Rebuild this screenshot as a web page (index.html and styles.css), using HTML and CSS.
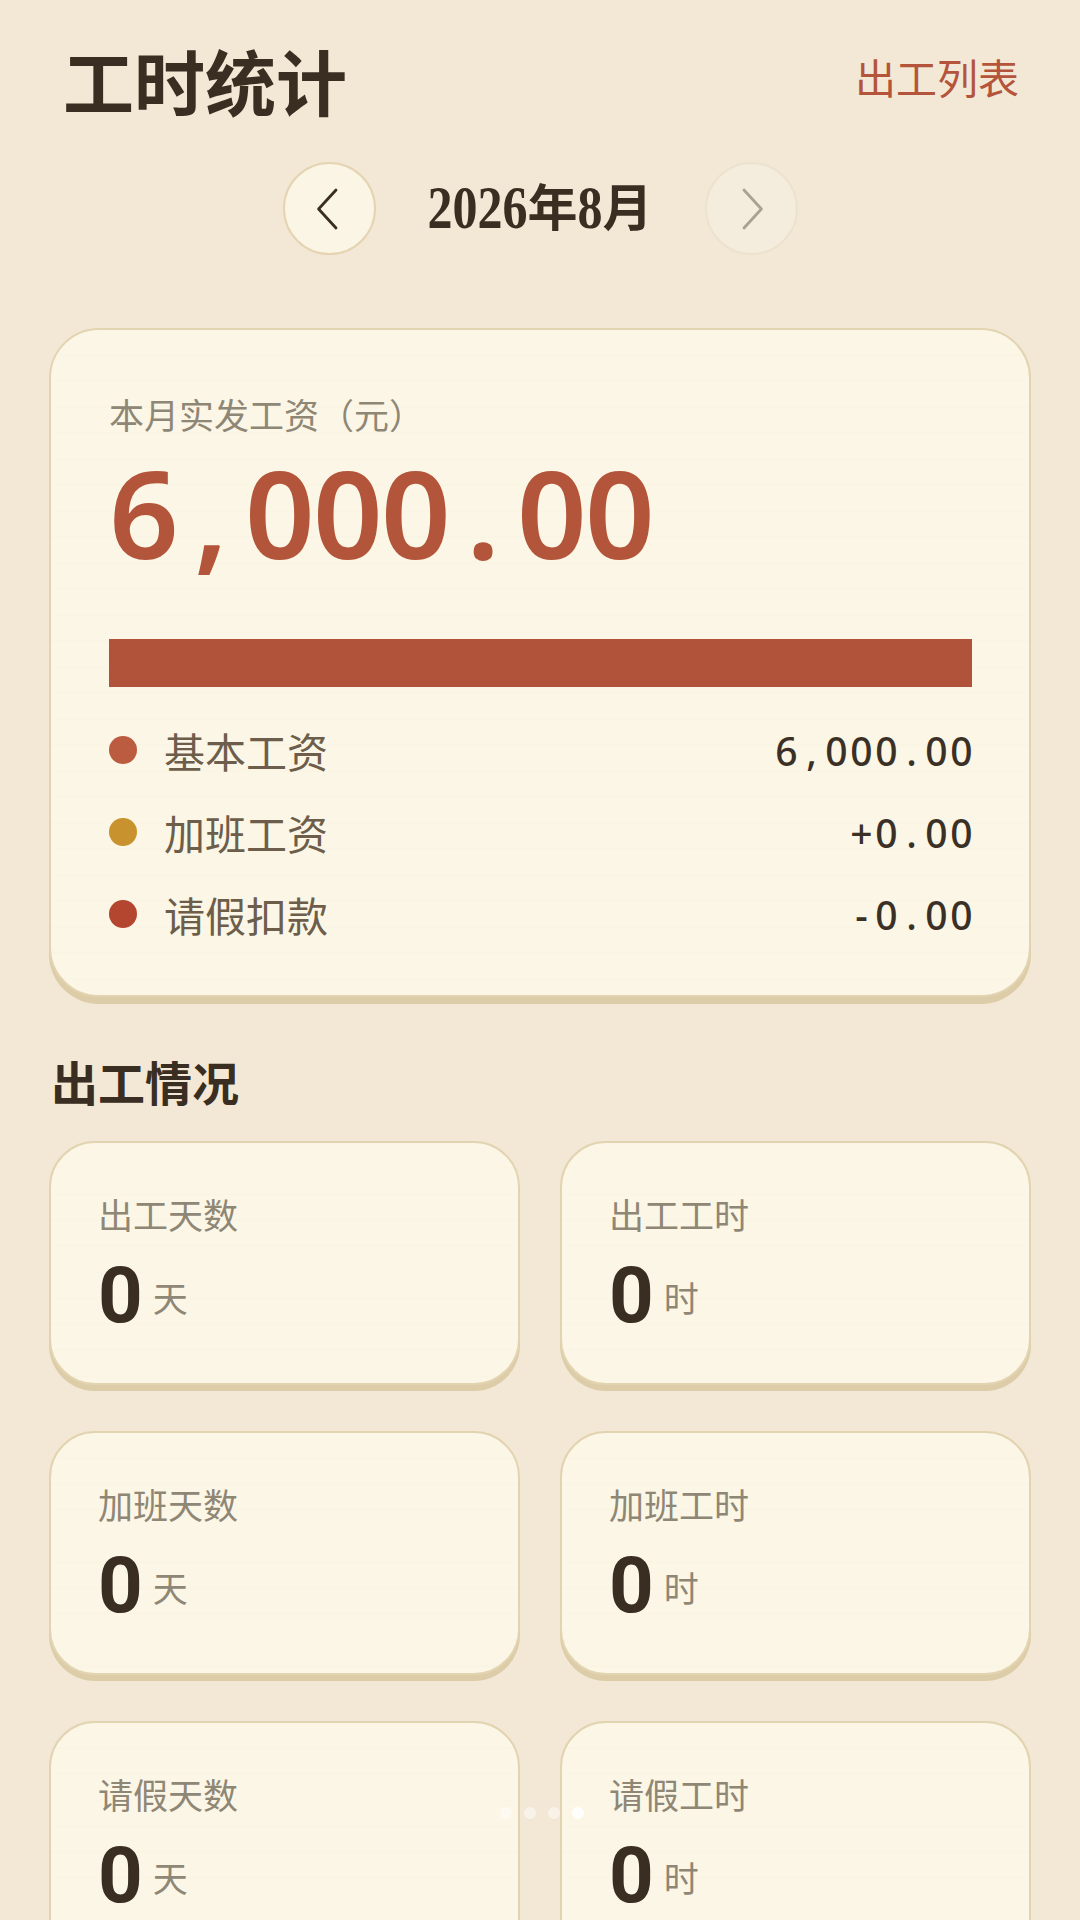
FILE: index.html
```html
<!DOCTYPE html>
<html lang="zh-CN">
<head>
<meta charset="utf-8">
<title>工时统计</title>
<link rel="stylesheet" href="styles.css">
</head>
<body>
<div class="page">
  <header class="header">
    <h1 class="title">工时统计</h1>
    <a class="link">出工列表</a>
  </header>

  <nav class="month-nav">
    <button class="nav-btn">
      <svg viewBox="0 0 24 24" width="48" height="48"><path d="M15.5 2.5 L6.8 12 L15.5 21.5" fill="none" stroke="#3a2e22" stroke-width="1.4" stroke-linecap="round" stroke-linejoin="round"/></svg>
    </button>
    <div class="month"><span class="d">2026</span>年<span class="d">8</span>月</div>
    <button class="nav-btn disabled">
      <svg viewBox="0 0 24 24" width="48" height="48"><path d="M8.5 2.5 L17.2 12 L8.5 21.5" fill="none" stroke="#a9a290" stroke-width="1.4" stroke-linecap="round" stroke-linejoin="round"/></svg>
    </button>
  </nav>

  <section class="card salary">
    <div class="salary-label">本月实发工资（元）</div>
    <div class="salary-amount"><span class="c">6</span><span class="c">,</span><span class="c">0</span><span class="c">0</span><span class="c">0</span><span class="c">.</span><span class="c">0</span><span class="c">0</span></div>
    <div class="bar"><div class="bar-fill" style="width:100%"></div></div>
    <ul class="rows">
      <li class="row"><span class="dot dot-base"></span><span class="row-label">基本工资</span><span class="row-value"><span class="c">6</span><span class="c">,</span><span class="c">0</span><span class="c">0</span><span class="c">0</span><span class="c">.</span><span class="c">0</span><span class="c">0</span></span></li>
      <li class="row"><span class="dot dot-ot"></span><span class="row-label">加班工资</span><span class="row-value"><span class="c">+</span><span class="c">0</span><span class="c">.</span><span class="c">0</span><span class="c">0</span></span></li>
      <li class="row"><span class="dot dot-leave"></span><span class="row-label">请假扣款</span><span class="row-value"><span class="c">-</span><span class="c">0</span><span class="c">.</span><span class="c">0</span><span class="c">0</span></span></li>
    </ul>
  </section>

  <h2 class="section-title">出工情况</h2>

  <div class="stats">
    <div class="card stat"><div class="stat-label">出工天数</div><div class="stat-value"><span class="num">0</span><span class="unit">天</span></div></div>
    <div class="card stat"><div class="stat-label">出工工时</div><div class="stat-value"><span class="num">0</span><span class="unit">时</span></div></div>
    <div class="card stat"><div class="stat-label">加班天数</div><div class="stat-value"><span class="num">0</span><span class="unit">天</span></div></div>
    <div class="card stat"><div class="stat-label">加班工时</div><div class="stat-value"><span class="num">0</span><span class="unit">时</span></div></div>
    <div class="card stat"><div class="stat-label">请假天数</div><div class="stat-value"><span class="num">0</span><span class="unit">天</span></div></div>
    <div class="card stat"><div class="stat-label">请假工时</div><div class="stat-value"><span class="num">0</span><span class="unit">时</span></div></div>
  </div>
</div>

<div class="pager">
  <span class="pdot"></span><span class="pdot"></span><span class="pdot"></span><span class="pdot active"></span>
</div>
</body>
</html>
```
FILE: styles.css
```css
* { box-sizing: border-box; }

html, body {
  margin: 0;
  padding: 0;
}

body {
  background: #f2e8d5;
  font-family: "Noto Sans CJK SC", "Noto Sans", sans-serif;
  color: #3a2e22;
  height: 1920px;
  overflow: hidden;
}

.page {
  padding: 0 49px;
}

/* Header */
.header {
  display: flex;
  justify-content: space-between;
  align-items: center;
  padding: 44px 12px 0 14px;
}

.title {
  margin: 0;
  font-size: 71px;
  line-height: 70px;
  font-weight: 700;
  color: #3a2e22;
}

.link {
  font-size: 41px;
  line-height: 1;
  color: #b4553b;
  margin-top: -6px;
}

/* Month nav */
.month-nav {
  display: flex;
  justify-content: center;
  align-items: center;
  margin-top: 48px;
  gap: 52px;
}

.nav-btn {
  width: 93px;
  height: 93px;
  border-radius: 50%;
  border: 2px solid #e4d4b2;
  background: #fbf5e5;
  display: flex;
  align-items: center;
  justify-content: center;
  padding: 0;
  flex: none;
}

.nav-btn.disabled {
  background: #f4ecdc;
  border-color: #ece2ce;
}

.month {
  font-family: "Liberation Serif", "Noto Sans CJK SC", serif;
  font-weight: 700;
  font-size: 50px;
  color: #3a2e22;
  line-height: 1;
}

.month .d {
  display: inline-block;
  transform: scaleY(1.22);
  transform-origin: 50% 70%;
}

/* Cards */
.card {
  background-color: #fcf6e6;
  background-image: repeating-linear-gradient(180deg, rgba(120, 90, 40, 0) 0px, rgba(120, 90, 40, 0) 24px, rgba(120, 90, 40, 0.018) 25px, rgba(120, 90, 40, 0) 26px);
  border: 2px solid #e3d4b1;
  box-shadow: 0 7px 0 #ddcca8;
}

.salary {
  margin-top: 73px;
  border-radius: 50px;
  padding: 62px 57px 40px 58px;
}

.salary-label {
  font-size: 35px;
  line-height: 43px;
  color: #8f8775;
}

.salary-amount {
  margin-top: 13px;
  font-family: "Noto Sans", "Open Sans", sans-serif;
  font-weight: 600;
  font-size: 122px;
  line-height: 128px;
  color: #b3553a;
  display: flex;
}

.salary-amount .c {
  display: inline-block;
  width: 68px;
  text-align: center;
}

.bar {
  margin-top: 63px;
  height: 48px;
  background: #ecdfc5;
}

.bar-fill {
  height: 100%;
  background: #b0533a;
}

.rows {
  list-style: none;
  margin: 22px 0 0 0;
  padding: 0;
}

.row {
  display: flex;
  align-items: center;
  height: 82px;
}

.dot {
  width: 28px;
  height: 28px;
  border-radius: 50%;
  margin-right: 27px;
  flex: none;
}

.dot-base { background: #bb5b3f; }
.dot-ot { background: #c8922f; }
.dot-leave { background: #b4452f; }

.row-label {
  font-size: 41px;
  color: #6c5e4b;
  flex: 1;
}

.row-value {
  font-family: "Noto Sans", "Open Sans", sans-serif;
  font-weight: 500;
  font-size: 39px;
  color: #3a3026;
  display: flex;
  margin-right: -2px;
}

.row-value .c {
  display: inline-block;
  width: 25px;
  text-align: center;
}

/* Section */
.section-title {
  margin: 60px 0 37px 2px;
  font-size: 47px;
  line-height: 47px;
  font-weight: 700;
  color: #3a2e22;
}

.stats {
  display: grid;
  grid-template-columns: 1fr 1fr;
  column-gap: 40px;
  row-gap: 46px;
}

.stat {
  height: 244px;
  border-radius: 46px;
  padding: 50px 40px 0 47px;
  box-shadow: 0 6px 0 #ddcca8;
}

.stat-label {
  font-size: 35px;
  line-height: 42px;
  color: #8f8775;
}

.stat-value {
  margin-top: 23px;
  display: flex;
  align-items: flex-end;
}

.num {
  font-family: Roboto, "Noto Sans", sans-serif;
  font-weight: 700;
  font-size: 78px;
  line-height: 76px;
  color: #3a2e22;
}

.unit {
  font-size: 35px;
  line-height: 35px;
  padding-bottom: 20px;
  color: #8f8775;
  margin-left: 10px;
}

/* Pager overlay */
.pager {
  position: fixed;
  left: 0;
  right: 0;
  top: 1807px;
  display: flex;
  justify-content: center;
  gap: 12px;
  padding-left: 3px;
}

.pdot {
  width: 12px;
  height: 12px;
  border-radius: 50%;
  background: rgba(255, 255, 255, 0.45);
}

.pdot.active {
  background: rgba(255, 255, 255, 0.9);
}
```
